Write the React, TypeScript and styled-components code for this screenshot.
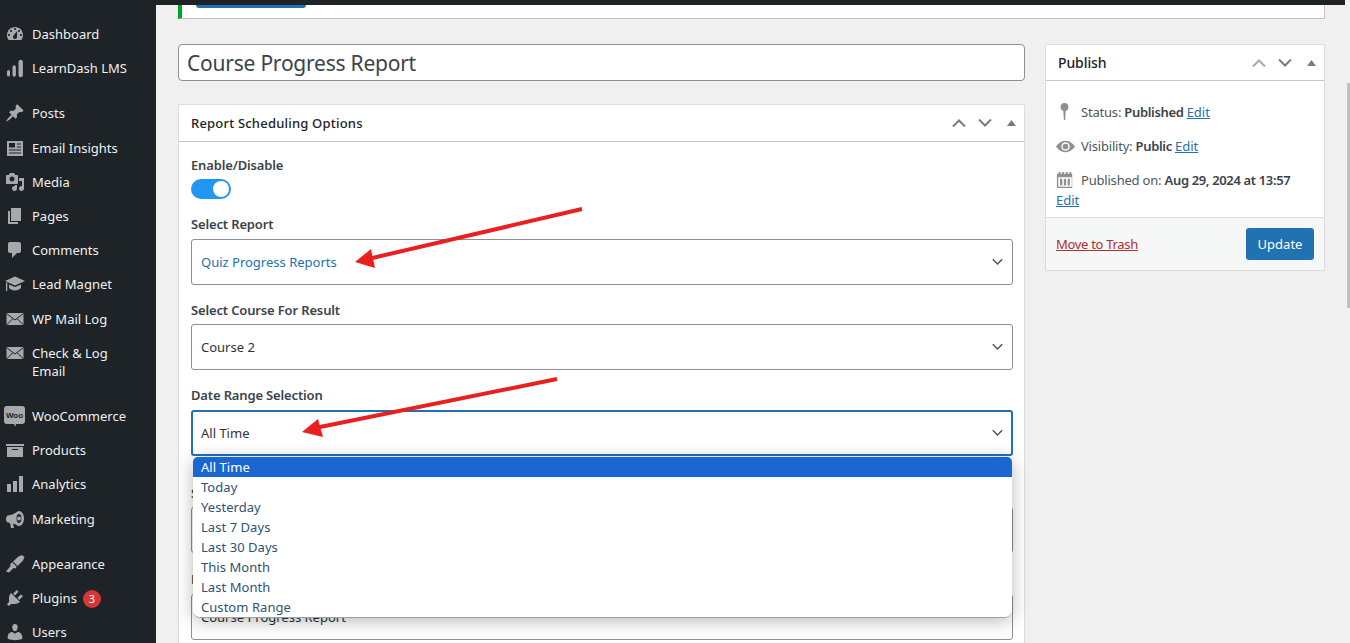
import React from "react";
import styled, { createGlobalStyle } from "styled-components";

const Global = createGlobalStyle`
  html, body { margin: 0; padding: 0; height: 643px; overflow: hidden; background: #f0f0f1; }
  body { font-family: "Noto Sans", "Liberation Sans", sans-serif; color: #3c434a; }
  * { box-sizing: border-box; }
`;

const Shell = styled.div`display: flex; height: 643px; width: 1350px; overflow: hidden; position: relative;`;
const Sidebar = styled.nav`width: 156px; flex: none; background: #1d2327; padding-top: 17px; overflow: hidden;`;
const MenuGroup = styled.div`margin-bottom: 11px;`;
const MenuItem = styled.div<{ $tall?: boolean }>`
  display: flex; align-items: flex-start; min-height: ${p => (p.$tall ? "52.4px" : "34.2px")};
  padding-top: 8px; color: #f0f0f1; font-size: 13px; line-height: 18px;
`;
const MenuIcon = styled.span`width: 32px; flex: none; height: 18px; display: flex; justify-content: center; align-items: center; color: #a7aaad; padding-right: 3px;`;
const Badge = styled.span`
  display: inline-flex; width: 18px; height: 18px; border-radius: 50%; background: #d63638; color: #fff;
  font-size: 11px; align-items: center; justify-content: center; margin-left: 6px;
`;
const Main = styled.main`flex: 1; display: flex; flex-direction: column; min-width: 0;`;
const Scroll = styled.div`width: 5px; flex: none; background: #f1f1f1; padding: 83px 0 0 2px;`;
const Thumb = styled.div`height: 225px; background: #c1c1c1;`;
const TopStrip = styled.div`height: 5px; background: #1d2327; flex: none;`;
const Content = styled.div`padding: 0 20px 0 22px;`;
const Notice = styled.div`height: 14px; background: #fff; border-left: 4px solid #00a32a; border-bottom: 1px solid #c3c4c7; border-right: 1px solid #c3c4c7; padding-left: 14px;`;
const NoticeButton = styled.div`width: 110px; height: 3px; background: #2271b1; border-radius: 0 0 3px 3px;`;
const Columns = styled.div`display: flex; gap: 20px; margin-top: 25px; align-items: flex-start;`;
const Left = styled.div`width: 847px; flex: none;`;
const TitleInput = styled.div`
  height: 37px; background: #fff; border: 1px solid #8c8f94; border-radius: 4px; padding: 0 8px;
  font-size: 21px; line-height: 37px; color: #3c434a; letter-spacing: -.23px;
`;
const Box = styled.section`background: #fff; border: 1px solid #dcdcde; border-radius: 2px 2px 0 0;`;
const FormBox = styled(Box)`margin-top: 23px; position: relative;`;
const BoxHead = styled.header`
  height: 37px; display: flex; align-items: center; justify-content: space-between; padding: 0 0 0 12px;
  border-bottom: 1px solid #c3c4c7; font-size: 13px; color: #1d2327;
`;
const BoxTitle = styled.span`font-weight: 500; letter-spacing: .2px;`;
const Handles = styled.span`display: flex; align-items: center;`;
const HandleSlot = styled.span`width: 26px; display: flex; justify-content: center; align-items: center;`;
const FormBody = styled.div`padding: 14px 12px 0; height: 540px;`;
const Label = styled.div`font-size: 13px; font-weight: 600; line-height: 18px; color: #3c434a; letter-spacing: -.15px;`;
const Toggle = styled.div`width: 40px; height: 20px; border-radius: 10px; background: #2196f3; margin: 5px 0 16px; display: flex; justify-content: flex-end; padding: 2px;`;
const Knob = styled.div`width: 16px; height: 16px; border-radius: 50%; background: #fff;`;
const Select = styled.div<{ $focus?: boolean; $blue?: boolean; $gap?: number }>`
  height: 46px; margin: 5.6px 0 ${p => p.$gap ?? 16}px; width: 822px; background: #fff;
  border: ${p => (p.$focus ? "2px solid #2271b1" : "1px solid #8c8f94")}; border-radius: 3px;
  display: flex; align-items: center; justify-content: space-between;
  padding: 0 ${p => (p.$focus ? 8 : 9)}px; font-size: 13px; color: ${p => (p.$blue ? "#2271b1" : "#2c3338")};
`;
const Dropdown = styled.ul`
  position: absolute; left: 14px; top: 352px; width: 819px; margin: 0; padding: 0; list-style: none; background: #fff;
  border-radius: 5px 5px 8px 8px; overflow: hidden; font-size: 13px; line-height: 20px; letter-spacing: .05px;
  box-shadow: 0 3px 18px rgba(0,0,0,.28); border-bottom: 1px solid #a0a0a0;
`;
const Option = styled.li<{ $active?: boolean }>`
  height: 20px; padding-left: 8px; color: ${p => (p.$active ? "#fff" : "#2f5273")}; background: ${p => (p.$active ? "#1a66d2" : "#fff")};
`;
const Arrows = styled.svg`position: absolute; left: 0; top: 0; pointer-events: none;`;
const Right = styled.aside`width: 280px; flex: none;`;
const PublishHead = styled(BoxHead)`height: 36px;`;
const PublishTitle = styled.span`font-weight: 500; font-size: 14px; letter-spacing: -.1px;`;
const PublishBody = styled.div`padding: 21px 10px 7px; font-size: 13px; color: #50575e; letter-spacing: -.2px;`;
const Meta = styled.div`display: flex; align-items: flex-start; line-height: 20px; margin-bottom: 14px;`;
const MetaLast = styled(Meta)`margin-bottom: 0;`;
const MetaIcon = styled.span`width: 25px; height: 20px; flex: none; display: flex; align-items: center; color: #8c8f94;`;
const Strong = styled.b`font-weight: 600; color: #3c434a; letter-spacing: -.35px;`;
const Link = styled.a`color: #2271b1; text-decoration: underline; letter-spacing: 0;`;
const EditLine = styled.div`line-height: 20px;`;
const Actions = styled.div`height: 53px; background: #f6f7f7; border-top: 1px solid #dcdcde; display: flex; align-items: center; justify-content: space-between; padding: 0 10px; font-size: 13px;`;
const Trash = styled.a`color: #b32d2e; text-decoration: underline; letter-spacing: -.3px;`;
const Update = styled.div`width: 68px; height: 32px; background: #2271b1; color: #fff; border-radius: 3px; display: flex; align-items: center; justify-content: center; font-size: 13px;`;

const I = (d: string, s = 20) => <svg width={s} height={s} viewBox="0 0 20 20" fill="currentColor" fillRule="evenodd"><path d={d} /></svg>;

const Envelope = () => (
  <svg width="20" height="20" viewBox="0 0 20 20">
    <rect x="1.500" y="4" width="17" height="12" fill="currentColor" />
    <path d="M1.500 4.500 10 11l8.500-6.500M1.500 16l6.500-6.500M18.500 16 12 9.500" fill="none" stroke="#1d2327" strokeWidth="1" />
  </svg>
);
const WooIcon = () => (
  <svg width="21" height="21" viewBox="0 0 21 21">
    <path d="M3 0h15a3 3 0 0 1 3 3v12a3 3 0 0 1-3 3h-6l-1 3-1-3H3a3 3 0 0 1-3-3V3a3 3 0 0 1 3-3z" fill="currentColor" />
    <text x="10.500" y="12" fontSize="8" fontWeight="700" fontFamily="Liberation Sans, sans-serif" textAnchor="middle" fill="#1d2327">Woo</text>
  </svg>
);

const icons: Record<string, React.ReactNode> = {
  dash: I("M3.76 16h12.48c1.100-1.370 1.760-3.110 1.760-5 0-4.420-3.580-8-8-8s-8 3.580-8 8c0 1.890.66 3.630 1.760 5zM10 4c.55 0 1 .45 1 1s-.45 1-1 1-1-.45-1-1 .45-1 1-1zM6 6c.55 0 1 .45 1 1s-.45 1-1 1-1-.45-1-1 .45-1 1-1zm8 0c.55 0 1 .45 1 1s-.45 1-1 1-1-.45-1-1 .45-1 1-1zm-5.370 5.550L12 7v6c0 1.100-.9 2-2 2s-2-.9-2-2c0-.57.24-1.080.63-1.450zM4 10c.55 0 1 .45 1 1s-.45 1-1 1-1-.45-1-1 .45-1 1-1zm12 0c.55 0 1 .45 1 1s-.45 1-1 1-1-.45-1-1 .45-1 1-1z"),
  ld: I("M2 13.500a1.500 1.500 0 0 1 3 0V17a1.500 1.500 0 0 1-3 0zM7.500 9a1.700 1.700 0 0 1 3.400 0v8a1.700 1.700 0 0 1-3.400 0zM13.500 4a2.200 2.200 0 0 1 4.400 0v13a2.200 2.200 0 0 1-4.400 0z"),
  pin: I("M10.440 3.020l1.820-1.820 6.360 6.350-1.830 1.820c-1.050-.68-2.480-.57-3.410.36l-.75.75c-.92.93-1.040 2.350-.35 3.410l-1.830 1.820-2.410-2.410-2.800 2.790c-.42.42-3.380 2.710-3.800 2.290s1.860-3.390 2.280-3.810l2.790-2.790L4.100 9.360l1.830-1.820c1.050.69 2.480.57 3.400-.36l.75-.75c.93-.92 1.050-2.350.36-3.410z"),
  mail: I("M2 3h16v15H2zM4 5v4.500h6V5zm8 .5v1h4v-1zm0 3v1h4v-1zM4 11.500v1h12v-1zm0 3v1h12v-1z"),
  media: I("M13 11V4c0-.55-.45-1-1-1h-1.670L9 1H5L3.670 3H2c-.55 0-1 .45-1 1v7c0 .55.45 1 1 1h10c.55 0 1-.45 1-1zM7 4.500c1.380 0 2.500 1.120 2.500 2.500S8.380 9.500 7 9.500 4.500 8.380 4.500 7 5.620 4.500 7 4.500zM14 6h5v10.500c0 1.380-1.120 2.500-2.500 2.500S14 17.880 14 16.500s1.120-2.500 2.500-2.500c.17 0 .34.020.5.050V9h-3V6zm-4 8.050V13h2v3.500c0 1.380-1.120 2.500-2.500 2.500S7 17.880 7 16.500 8.120 14 9.500 14c.17 0 .34.020.5.050z"),
  pages: I("M6 15V2h10v13H6zm-1 1h8v2H3V5h2v11z"),
  comment: I("M5 2h9c1.100 0 2 .9 2 2v7c0 1.100-.9 2-2 2h-2l-5 5v-5H5c-1.100 0-2-.9-2-2V4c0-1.100.9-2 2-2z"),
  cap: I("M10 2.500 20 7l-10 4.500L0 7zM4 10.500 10 13l6-2.500v3.500c-1.500 1.500-3.500 2.500-6 2.500s-4.500-1-6-2.500zM1 8.500h1.300V17H1z"),
  env: <Envelope />,
  woo: <WooIcon />,
  box: I("M19 4v2H1V4h18zM2 7h16v10H2V7zm11 3V9H7v1h6z"),
  bars: I("M18 18V2h-4v16h4zm-6 0V7H8v11h4zm-6 0v-8H2v8h4z"),
  mega: I("M18 5c-1-2-2.500-3-4-3-1 0-2 .5-3 1.500C9 5 6 6 3 6.500 1.500 7 1 8.500 1 10s.5 3 2 3.500l2 .5 1 5h3l-1-4.500 3 1c1 1 2 1.500 3 1.500 1.500 0 3-1 4-3 .6-1.200 1-3 1-4.500s-.4-3.300-1-4.500zm-4 9c-1.500 0-2.500-2-2.500-4.500S12.500 5 14 5s2.500 2 2.500 4.500S15.500 14 14 14zm0-6.500a2 2 0 1 0 0 4 2 2 0 0 0 0-4z"),
  brush: I("M19.500 3 17 1l-3.500 1.500-5.500 5L12.500 12l5.500-5.500zM7.200 8.300l4.500 4.500-1.200 1.700-2-.5-4.500 4.500-3-1 4.500-5.500-.3-2z"),
  plug: I("M13.110 4.360L9.870 7.600 8 5.730l3.240-3.240c.35-.34 1.050-.2 1.560.32.52.51.66 1.210.31 1.550zm-8 1.770l.91-1.120 9.010 9.010-1.190.84c-.71.71-2.630 1.160-3.820 1.160H6.140L4.900 17.260c-.59.59-1.540.59-2.120 0-.59-.58-.59-1.530 0-2.120l1.240-1.240v-3.880c0-1.130.4-3.190 1.090-3.890zm7.260 3.970l3.240-3.240c.34-.35 1.040-.21 1.550.31.52.51.66 1.210.31 1.550l-3.240 3.250z"),
  user: I("M10 9.250c-2.270 0-2.730-3.440-2.730-3.440C7 4.020 7.820 2 9.970 2c2.160 0 2.980 2.020 2.710 3.810 0 0-.41 3.440-2.680 3.440zm0 2.570L12.720 10c2.390 0 4.520 2.330 4.520 4.530v2.490s-3.650 1.130-7.240 1.130c-3.650 0-7.240-1.130-7.240-1.130v-2.490c0-2.250 1.940-4.480 4.460-4.480z"),
};

const Chevron = ({ up, color = "#787c82", w = 14 }: { up?: boolean; color?: string; w?: number }) => (
  <svg width={w} height="8" viewBox="0 0 14 8" fill="none" stroke={color} strokeWidth="2">
    <path d={up ? "M1 7.500 7 1.500l6 6" : "M1 .5l6 6 6-6"} />
  </svg>
);
const Tri = () => <svg width="9" height="6" viewBox="0 0 9 6" fill="#787c82"><path d="M4.500 0 9 6H0z" /></svg>;
const HandleSet = ({ faded }: { faded?: boolean }) => (
  <Handles>
    <HandleSlot><Chevron up color={faded ? "#a7aaad" : "#787c82"} /></HandleSlot>
    <HandleSlot><Chevron /></HandleSlot>
    <HandleSlot><Tri /></HandleSlot>
  </Handles>
);
const SelectChevron = () => <Chevron color="#50575e" w={11} />;

const Item = ({ icon, children, tall }: { icon: string; children: React.ReactNode; tall?: boolean }) => (
  <MenuItem $tall={tall}><MenuIcon>{icons[icon]}</MenuIcon><span>{children}</span></MenuItem>
);

const options = ["All Time", "Today", "Yesterday", "Last 7 Days", "Last 30 Days", "This Month", "Last Month", "Custom Range"];

export default function App() {
  return (
    <Shell>
      <Global />
      <Sidebar>
        <MenuGroup>
          <Item icon="dash">Dashboard</Item>
          <Item icon="ld">LearnDash LMS</Item>
        </MenuGroup>
        <MenuGroup>
          <Item icon="pin">Posts</Item>
          <Item icon="mail">Email Insights</Item>
          <Item icon="media">Media</Item>
          <Item icon="pages">Pages</Item>
          <Item icon="comment">Comments</Item>
          <Item icon="cap">Lead Magnet</Item>
          <Item icon="env">WP Mail Log</Item>
          <Item icon="env" tall>Check &amp; Log<br />Email</Item>
        </MenuGroup>
        <MenuGroup>
          <Item icon="woo">WooCommerce</Item>
          <Item icon="box">Products</Item>
          <Item icon="bars">Analytics</Item>
          <Item icon="mega">Marketing</Item>
        </MenuGroup>
        <MenuGroup>
          <Item icon="brush">Appearance</Item>
          <Item icon="plug">Plugins<Badge>3</Badge></Item>
          <Item icon="user">Users</Item>
        </MenuGroup>
      </Sidebar>
      <Main>
        <TopStrip />
        <Content>
          <Notice><NoticeButton /></Notice>
          <Columns>
            <Left>
              <TitleInput>Course Progress Report</TitleInput>
              <FormBox>
                <BoxHead><BoxTitle>Report Scheduling Options</BoxTitle><HandleSet /></BoxHead>
                <FormBody>
                  <Label>Enable/Disable</Label>
                  <Toggle><Knob /></Toggle>
                  <Label>Select Report</Label>
                  <Select $blue>Quiz Progress Reports<SelectChevron /></Select>
                  <Label>Select Course For Result</Label>
                  <Select>Course 2<SelectChevron /></Select>
                  <Label>Date Range Selection</Label>
                  <Select $focus $gap={28}>All Time<SelectChevron /></Select>
                  <Label>Select Format</Label>
                  <Select $gap={17} />
                  <Label>Report Name</Label>
                  <Select>Course Progress Report</Select>
                </FormBody>
                <Dropdown>
                  {options.map((o, i) => <Option key={o} $active={i === 0}>{o}</Option>)}
                </Dropdown>
              </FormBox>
            </Left>
            <Right>
              <Box>
                <PublishHead><PublishTitle>Publish</PublishTitle><HandleSet faded /></PublishHead>
                <PublishBody>
                  <Meta><MetaIcon>{I("M8.500 1a4 4 0 0 1 1.200 7.800L9.200 18H7.900L7.300 8.800A4 4 0 0 1 8.500 1z")}</MetaIcon><span>Status: <Strong>Published</Strong> <Link>Edit</Link></span></Meta>
                  <Meta><MetaIcon>{I("M10 4C5 4 1.500 8 0 10c1.500 2 5 6 10 6s8.500-4 10-6c-1.500-2-5-6-10-6zm0 1.500a4.500 4.500 0 1 1 0 9 4.500 4.500 0 0 1 0-9zm0 1.500a3 3 0 1 0 0 6 3 3 0 0 0 0-6z", 19)}</MetaIcon><span>Visibility: <Strong>Public</Strong> <Link>Edit</Link></span></Meta>
                  <div>
                    <MetaLast><MetaIcon>{I("M1 3h2V1h2v2h2V1h2v2h2V1h2v2h2V1h2v2h1v16H1zm1.500 4v10.500h15V7zM4.500 8.500h2.500V16H4.500zm4.200 0h2.500V16H8.700zm4.200 0h2.500V16h-2.500z", 18)}</MetaIcon><span>Published on: <Strong>Aug 29, 2024 at 13:57</Strong></span></MetaLast>
                    <EditLine><Link>Edit</Link></EditLine>
                  </div>
                </PublishBody>
                <Actions><Trash>Move to Trash</Trash><Update>Update</Update></Actions>
              </Box>
            </Right>
          </Columns>
        </Content>
      </Main>
      <Scroll><Thumb /></Scroll>
      <Arrows width="1350" height="643" viewBox="0 0 1350 643">
        <g fill="#e8201f">
          <path d="M582 209 368 259" stroke="#e8201f" strokeWidth="4" />
          <path d="M355 262 371 249 375 268z" />
          <path d="M557 379 315 428" stroke="#e8201f" strokeWidth="4" />
          <path d="M302 432 318 419 323 437z" />
        </g>
      </Arrows>
    </Shell>
  );
}
